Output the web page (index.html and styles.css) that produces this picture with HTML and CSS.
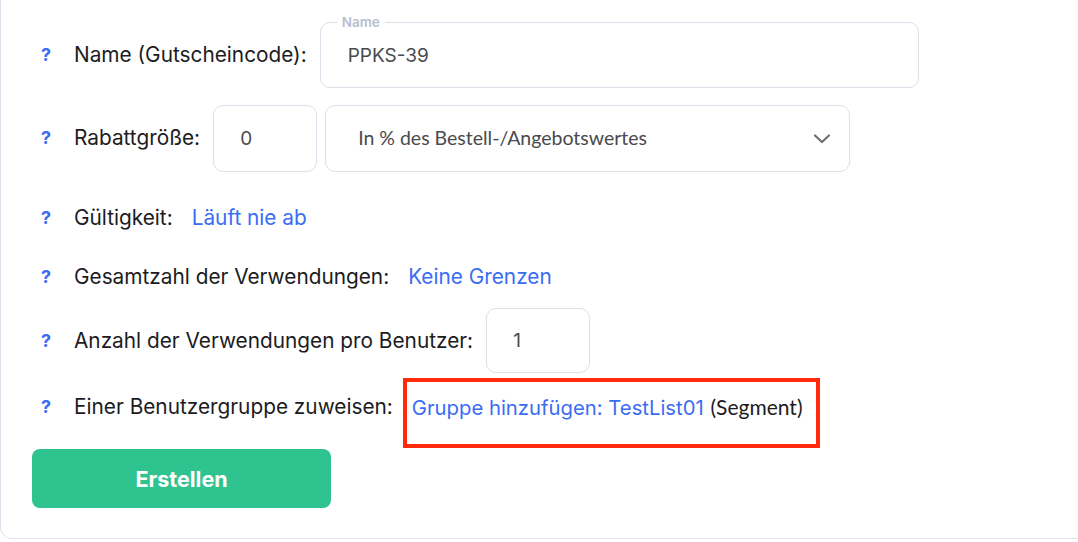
FILE: index.html
```html
<!DOCTYPE html>
<html lang="de">
<head>
    <meta charset="UTF-8">
    <meta name="viewport" content="width=device-width, initial-scale=1.0">
    <title>Gutschein erstellen</title>
    <link rel="stylesheet" href="styles.css">
</head>
<body>
    <div class="card">
        <form class="coupon-form" action="#" method="post">
            <!-- Name -->
            <div class="row row-name">
                <span class="hint">?</span>
                <label class="label">Name (Gutscheincode):</label>
                <div class="field field-name">
                    <span class="float-label">Name</span>
                    <input type="text" value="PPKS-39">
                </div>
            </div>

            <!-- Rabatt -->
            <div class="row row-discount">
                <span class="hint">?</span>
                <label class="label">Rabattgröße:</label>
                <div class="field field-small">
                    <input type="text" value="0">
                </div>
                <div class="field field-select">
                    <span class="select-text">In % des Bestell-/Angebotswertes</span>
                    <svg class="chevron" width="18" height="10" viewBox="0 0 18 10">
                        <path d="M2 1.5 L9 8 L16 1.5" fill="none" stroke="#6f6f73" stroke-width="2.2" stroke-linecap="round" stroke-linejoin="round"/>
                    </svg>
                </div>
            </div>

            <!-- Gültigkeit -->
            <div class="row row-valid">
                <span class="hint">?</span>
                <span class="label">Gültigkeit:</span>
                <a class="link" href="#">Läuft nie ab</a>
            </div>

            <!-- Gesamtzahl -->
            <div class="row row-total">
                <span class="hint">?</span>
                <span class="label">Gesamtzahl der Verwendungen:</span>
                <a class="link" href="#">Keine Grenzen</a>
            </div>

            <!-- pro Benutzer -->
            <div class="row row-per-user">
                <span class="hint">?</span>
                <label class="label">Anzahl der Verwendungen pro Benutzer:</label>
                <div class="field field-small">
                    <input type="text" value="1">
                </div>
            </div>

            <!-- Benutzergruppe -->
            <div class="row row-group">
                <span class="hint">?</span>
                <span class="label">Einer Benutzergruppe zuweisen:</span>
                <span class="group-value marked">
                    <a class="link-plain" href="#">Gruppe hinzufügen: TestList01</a> <span class="segment">(Segment)</span>
                </span>
            </div>

            <button type="submit" class="btn-create">Erstellen</button>
        </form>
    </div>
</body>
</html>
```

FILE: styles.css
```css
* { margin: 0; padding: 0; box-sizing: border-box; }
html, body { background: #fff; overflow: hidden; }
body { font-family: Inter, "Noto Sans", sans-serif; color: #1c1c1e; }

.card { margin: -12px -12px 0 0; padding: 25px 0 30px 40px; border: 1px solid #e2e1ee; border-radius: 12px; background: #fff; }

.coupon-form { display: flex; flex-direction: column; align-items: flex-start; }

.row { display: flex; align-items: center; font-size: 20.8px; line-height: 24px; }
.row-name { height: 82px; }
.row-discount { height: 84px; }
.row-valid { height: 76px; }
.row-total { height: 42px; }
.row-per-user { height: 85px; }
.row-group { height: 48px; }

.hint { width: 33px; color: #3a6cf4; font-weight: 700; font-size: 18px; }
.label { margin-right: 13px; }

.link, .link-plain { color: #3a6cf4; text-decoration: none; }
.link { margin-left: 6px; }

/* Eingabefelder */
.field { position: relative; display: flex; align-items: center; border: 1px solid #dfdeea; border-radius: 10px; background: #fff; }
.field input { width: 100%; border: 0; outline: none; background: transparent; font-family: Inter, "Noto Sans", sans-serif; font-size: 19px; color: #4a4a4d; }
.field-name { width: 599px; height: 66px; padding-left: 27px; }
.field-small { width: 104px; height: 66px; padding-left: 26px; }
.field-small + .field-select { margin-left: 8px; }
.field-select { width: 525px; height: 67px; padding: 0 18px 0 32px; justify-content: space-between; }
.row-discount .field-small { height: 67px; }
.row-per-user .field-small { height: 65px; }
.select-text { font-family: Lato, "Noto Sans", sans-serif; font-size: 19.5px; color: #4a4a4d; }
.chevron { margin-top: 1px; }

.float-label { position: absolute; top: -8px; left: 16px; padding: 0 5px; background: #fff; font-size: 13.5px; line-height: 14px; font-weight: 600; color: #b5bfd0; }

/* Markierung */
.group-value { position: relative; margin-left: 6px; font-size: 20.3px; }
.segment { margin-left: 1px; font-family: Lato, "Noto Sans", sans-serif; font-size: 21px; }
.marked::after { content: ""; position: absolute; top: -17px; left: -9px; right: -17px; bottom: -28px; border: 4px solid #ff2a0c; }

.btn-create { margin-top: 18px; width: 299px; height: 59px; border: 0; border-radius: 8px; margin-left: -9px; background: #2fc48f; color: #fff; font-family: Inter, "Noto Sans", sans-serif; font-size: 21.5px; font-weight: 700; cursor: pointer; }
```
